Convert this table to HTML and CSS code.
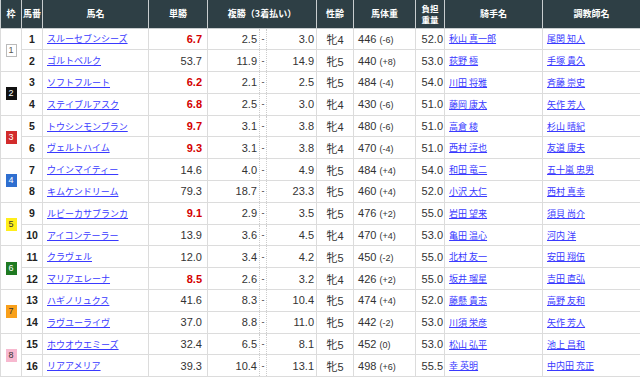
FILE: index.html
```html
<!doctype html>
<html lang="ja">
  <head>
    <meta charset="UTF-8" />
    <meta name="viewport" content="width=device-width, initial-scale=1.0" />
    <title>出馬表</title>
    <link rel="stylesheet" href="styles.css">
  </head>
  <body>
    <table class="race">
      <colgroup>
        <col style="width: 21px" />
        <col style="width: 21px" />
        <col style="width: 106px" />
        <col style="width: 59px" />
        <col style="width: 52px" />
        <col style="width: 7px" />
        <col style="width: 50px" />
        <col style="width: 37px" />
        <col style="width: 62px" />
        <col style="width: 29px" />
        <col style="width: 98px" />
        <col style="width: 98px" />
      </colgroup>
      <thead>
        <tr>
          <th>枠</th>
          <th>馬番</th>
          <th>馬名</th>
          <th>単勝</th>
          <th colspan="3">複勝（3着払い）</th>
          <th>性齢</th>
          <th>馬体重</th>
          <th class="small">負担<br />重量</th>
          <th>騎手名</th>
          <th>調教師名</th>
        </tr>
      </thead>
      <tbody>
        <tr>
          <td class="waku" rowspan="2"><span class="badge w1">1</span></td>
          <td class="num">1</td>
          <td class="name"><a href="#">スルーセブンシーズ</a></td>
          <td class="odds hot">6.7</td>
          <td class="lo">2.5</td><td class="dash">-</td><td class="hi">3.0</td>
          <td class="sex">牝4</td>
          <td class="weight">446 <small>(-6)</small></td>
          <td class="load">52.0</td>
          <td class="person"><a href="#">秋山 真一郎</a></td>
          <td class="person"><a href="#">尾関 知人</a></td>
        </tr>
        <tr>
          <td class="num">2</td>
          <td class="name"><a href="#">ゴルトベルク</a></td>
          <td class="odds">53.7</td>
          <td class="lo">11.9</td><td class="dash">-</td><td class="hi">14.9</td>
          <td class="sex">牝5</td>
          <td class="weight">440 <small>(+8)</small></td>
          <td class="load">53.0</td>
          <td class="person"><a href="#">荻野 極</a></td>
          <td class="person"><a href="#">手塚 貴久</a></td>
        </tr>
        <tr>
          <td class="waku" rowspan="2"><span class="badge w2">2</span></td>
          <td class="num">3</td>
          <td class="name"><a href="#">ソフトフルート</a></td>
          <td class="odds hot">6.2</td>
          <td class="lo">2.1</td><td class="dash">-</td><td class="hi">2.5</td>
          <td class="sex">牝5</td>
          <td class="weight">484 <small>(-4)</small></td>
          <td class="load">54.0</td>
          <td class="person"><a href="#">川田 将雅</a></td>
          <td class="person"><a href="#">斉藤 崇史</a></td>
        </tr>
        <tr>
          <td class="num">4</td>
          <td class="name"><a href="#">ステイブルアスク</a></td>
          <td class="odds hot">6.8</td>
          <td class="lo">2.5</td><td class="dash">-</td><td class="hi">3.0</td>
          <td class="sex">牝4</td>
          <td class="weight">430 <small>(-6)</small></td>
          <td class="load">51.0</td>
          <td class="person"><a href="#">藤岡 康太</a></td>
          <td class="person"><a href="#">矢作 芳人</a></td>
        </tr>
        <tr>
          <td class="waku" rowspan="2"><span class="badge w3">3</span></td>
          <td class="num">5</td>
          <td class="name"><a href="#">トウシンモンブラン</a></td>
          <td class="odds hot">9.7</td>
          <td class="lo">3.1</td><td class="dash">-</td><td class="hi">3.8</td>
          <td class="sex">牝4</td>
          <td class="weight">480 <small>(-6)</small></td>
          <td class="load">51.0</td>
          <td class="person"><a href="#">高倉 稜</a></td>
          <td class="person"><a href="#">杉山 晴紀</a></td>
        </tr>
        <tr>
          <td class="num">6</td>
          <td class="name"><a href="#">ヴェルトハイム</a></td>
          <td class="odds hot">9.3</td>
          <td class="lo">3.1</td><td class="dash">-</td><td class="hi">3.8</td>
          <td class="sex">牝4</td>
          <td class="weight">470 <small>(-4)</small></td>
          <td class="load">51.0</td>
          <td class="person"><a href="#">西村 淳也</a></td>
          <td class="person"><a href="#">友道 康夫</a></td>
        </tr>
        <tr>
          <td class="waku" rowspan="2"><span class="badge w4">4</span></td>
          <td class="num">7</td>
          <td class="name"><a href="#">ウインマイティー</a></td>
          <td class="odds">14.6</td>
          <td class="lo">4.0</td><td class="dash">-</td><td class="hi">4.9</td>
          <td class="sex">牝5</td>
          <td class="weight">484 <small>(+4)</small></td>
          <td class="load">54.0</td>
          <td class="person"><a href="#">和田 竜二</a></td>
          <td class="person"><a href="#">五十嵐 忠男</a></td>
        </tr>
        <tr>
          <td class="num">8</td>
          <td class="name"><a href="#">キムケンドリーム</a></td>
          <td class="odds">79.3</td>
          <td class="lo">18.7</td><td class="dash">-</td><td class="hi">23.3</td>
          <td class="sex">牝5</td>
          <td class="weight">460 <small>(+4)</small></td>
          <td class="load">52.0</td>
          <td class="person"><a href="#">小沢 大仁</a></td>
          <td class="person"><a href="#">西村 真幸</a></td>
        </tr>
        <tr>
          <td class="waku" rowspan="2"><span class="badge w5">5</span></td>
          <td class="num">9</td>
          <td class="name"><a href="#">ルビーカサブランカ</a></td>
          <td class="odds hot">9.1</td>
          <td class="lo">2.9</td><td class="dash">-</td><td class="hi">3.5</td>
          <td class="sex">牝5</td>
          <td class="weight">476 <small>(+2)</small></td>
          <td class="load">55.0</td>
          <td class="person"><a href="#">岩田 望来</a></td>
          <td class="person"><a href="#">須貝 尚介</a></td>
        </tr>
        <tr>
          <td class="num">10</td>
          <td class="name"><a href="#">アイコンテーラー</a></td>
          <td class="odds">13.9</td>
          <td class="lo">3.6</td><td class="dash">-</td><td class="hi">4.5</td>
          <td class="sex">牝4</td>
          <td class="weight">470 <small>(+4)</small></td>
          <td class="load">53.0</td>
          <td class="person"><a href="#">亀田 温心</a></td>
          <td class="person"><a href="#">河内 洋</a></td>
        </tr>
        <tr>
          <td class="waku" rowspan="2"><span class="badge w6">6</span></td>
          <td class="num">11</td>
          <td class="name"><a href="#">クラヴェル</a></td>
          <td class="odds">12.0</td>
          <td class="lo">3.4</td><td class="dash">-</td><td class="hi">4.2</td>
          <td class="sex">牝5</td>
          <td class="weight">450 <small>(-2)</small></td>
          <td class="load">55.0</td>
          <td class="person"><a href="#">北村 友一</a></td>
          <td class="person"><a href="#">安田 翔伍</a></td>
        </tr>
        <tr>
          <td class="num">12</td>
          <td class="name"><a href="#">マリアエレーナ</a></td>
          <td class="odds hot">8.5</td>
          <td class="lo">2.6</td><td class="dash">-</td><td class="hi">3.2</td>
          <td class="sex">牝4</td>
          <td class="weight">426 <small>(+2)</small></td>
          <td class="load">55.0</td>
          <td class="person"><a href="#">坂井 瑠星</a></td>
          <td class="person"><a href="#">吉田 直弘</a></td>
        </tr>
        <tr>
          <td class="waku" rowspan="2"><span class="badge w7">7</span></td>
          <td class="num">13</td>
          <td class="name"><a href="#">ハギノリュクス</a></td>
          <td class="odds">41.6</td>
          <td class="lo">8.3</td><td class="dash">-</td><td class="hi">10.4</td>
          <td class="sex">牝5</td>
          <td class="weight">474 <small>(+4)</small></td>
          <td class="load">52.0</td>
          <td class="person"><a href="#">藤懸 貴志</a></td>
          <td class="person"><a href="#">高野 友和</a></td>
        </tr>
        <tr>
          <td class="num">14</td>
          <td class="name"><a href="#">ラヴユーライヴ</a></td>
          <td class="odds">37.0</td>
          <td class="lo">8.8</td><td class="dash">-</td><td class="hi">11.0</td>
          <td class="sex">牝5</td>
          <td class="weight">442 <small>(-2)</small></td>
          <td class="load">53.0</td>
          <td class="person"><a href="#">川須 栄彦</a></td>
          <td class="person"><a href="#">矢作 芳人</a></td>
        </tr>
        <tr>
          <td class="waku" rowspan="2"><span class="badge w8">8</span></td>
          <td class="num">15</td>
          <td class="name"><a href="#">ホウオウエミーズ</a></td>
          <td class="odds">32.4</td>
          <td class="lo">6.5</td><td class="dash">-</td><td class="hi">8.1</td>
          <td class="sex">牝5</td>
          <td class="weight">452 <small>(0)</small></td>
          <td class="load">53.0</td>
          <td class="person"><a href="#">松山 弘平</a></td>
          <td class="person"><a href="#">池上 昌和</a></td>
        </tr>
        <tr>
          <td class="num">16</td>
          <td class="name"><a href="#">リアアメリア</a></td>
          <td class="odds">39.3</td>
          <td class="lo">10.4</td><td class="dash">-</td><td class="hi">13.1</td>
          <td class="sex">牝5</td>
          <td class="weight">498 <small>(+6)</small></td>
          <td class="load">55.5</td>
          <td class="person"><a href="#">幸 英明</a></td>
          <td class="person"><a href="#">中内田 充正</a></td>
        </tr>
      </tbody>
    </table>
  </body>
</html>
```

FILE: styles.css
```css
* {
  margin: 0;
  padding: 0;
  box-sizing: border-box;
}

body {
  font-family: "Liberation Sans", "Noto Sans CJK JP", sans-serif;
  background: white;
  color: #333;
  width: 640px;
  overflow: hidden;
}

.race {
  width: 640px;
  border-collapse: collapse;
  table-layout: fixed;
}

.race th {
  background: #2e3f45;
  color: white;
  font-family: "Noto Sans CJK JP", sans-serif;
  font-size: 9px;
  font-weight: 700;
  height: 28px;
  text-align: center;
  border: 1px solid #c8cdcf;
  border-top: none;
  white-space: nowrap;
  line-height: 1.25;
}

.race th.small {
  font-size: 8.5px;
}

.race td {
  height: 21.8px;
  border: 1px solid #dcdcdc;
  font-size: 11px;
  padding: 0 2px;
  white-space: nowrap;
  overflow: hidden;
}

.race td.waku {
  text-align: center;
  padding: 0;
}

.badge {
  display: inline-block;
  width: 11px;
  height: 13px;
  line-height: 13px;
  font-size: 9px;
  text-align: center;
  color: white;
  vertical-align: middle;
}

.w1 {
  background: white;
  color: #555;
  border: 1px solid #bbb;
  line-height: 11px;
}

.w2 {
  background: #111;
}

.w3 {
  background: #d22c2c;
}

.w4 {
  background: #2f6fd0;
}

.w5 {
  background: #ffee1a;
  color: #333;
}

.w6 {
  background: #1f7a22;
}

.w7 {
  background: #f9a01b;
  color: #333;
}

.w8 {
  background: #f7b8cf;
  color: #333;
}

.race td.num {
  text-align: center;
  font-weight: 700;
  font-size: 10.5px;
  color: #222;
}

.race td.name,
.race td.person {
  font-family: "Noto Sans CJK JP", sans-serif;
  font-size: 9px;
  padding-left: 4px;
}

.race a {
  color: #3a3aff;
  text-decoration: underline;
}

.race td.odds {
  text-align: right;
  padding-right: 5px;
}

.race td.hot {
  color: #d40000;
  font-weight: 700;
}

.race td.lo {
  text-align: right;
  padding-right: 2px;
  border-right: 1px dotted #ccc;
}

.race td.dash {
  padding: 0;
  text-align: center;
  font-size: 9px;
  border-left: 1px dotted #ccc;
  border-right: 1px dotted #ccc;
}

.race td.hi {
  text-align: right;
  border-left: 1px dotted #ccc;
}

.race td.sex {
  text-align: center;
}

.race td.sex,
.race td.weight {
  font-family: "Liberation Sans", "Noto Sans CJK JP", sans-serif;
}

.race td.weight {
  padding-left: 4px;
}

.race td.weight small {
  font-size: 9px;
}

.race td.load {
  text-align: right;
  padding-right: 1px;
}
```
